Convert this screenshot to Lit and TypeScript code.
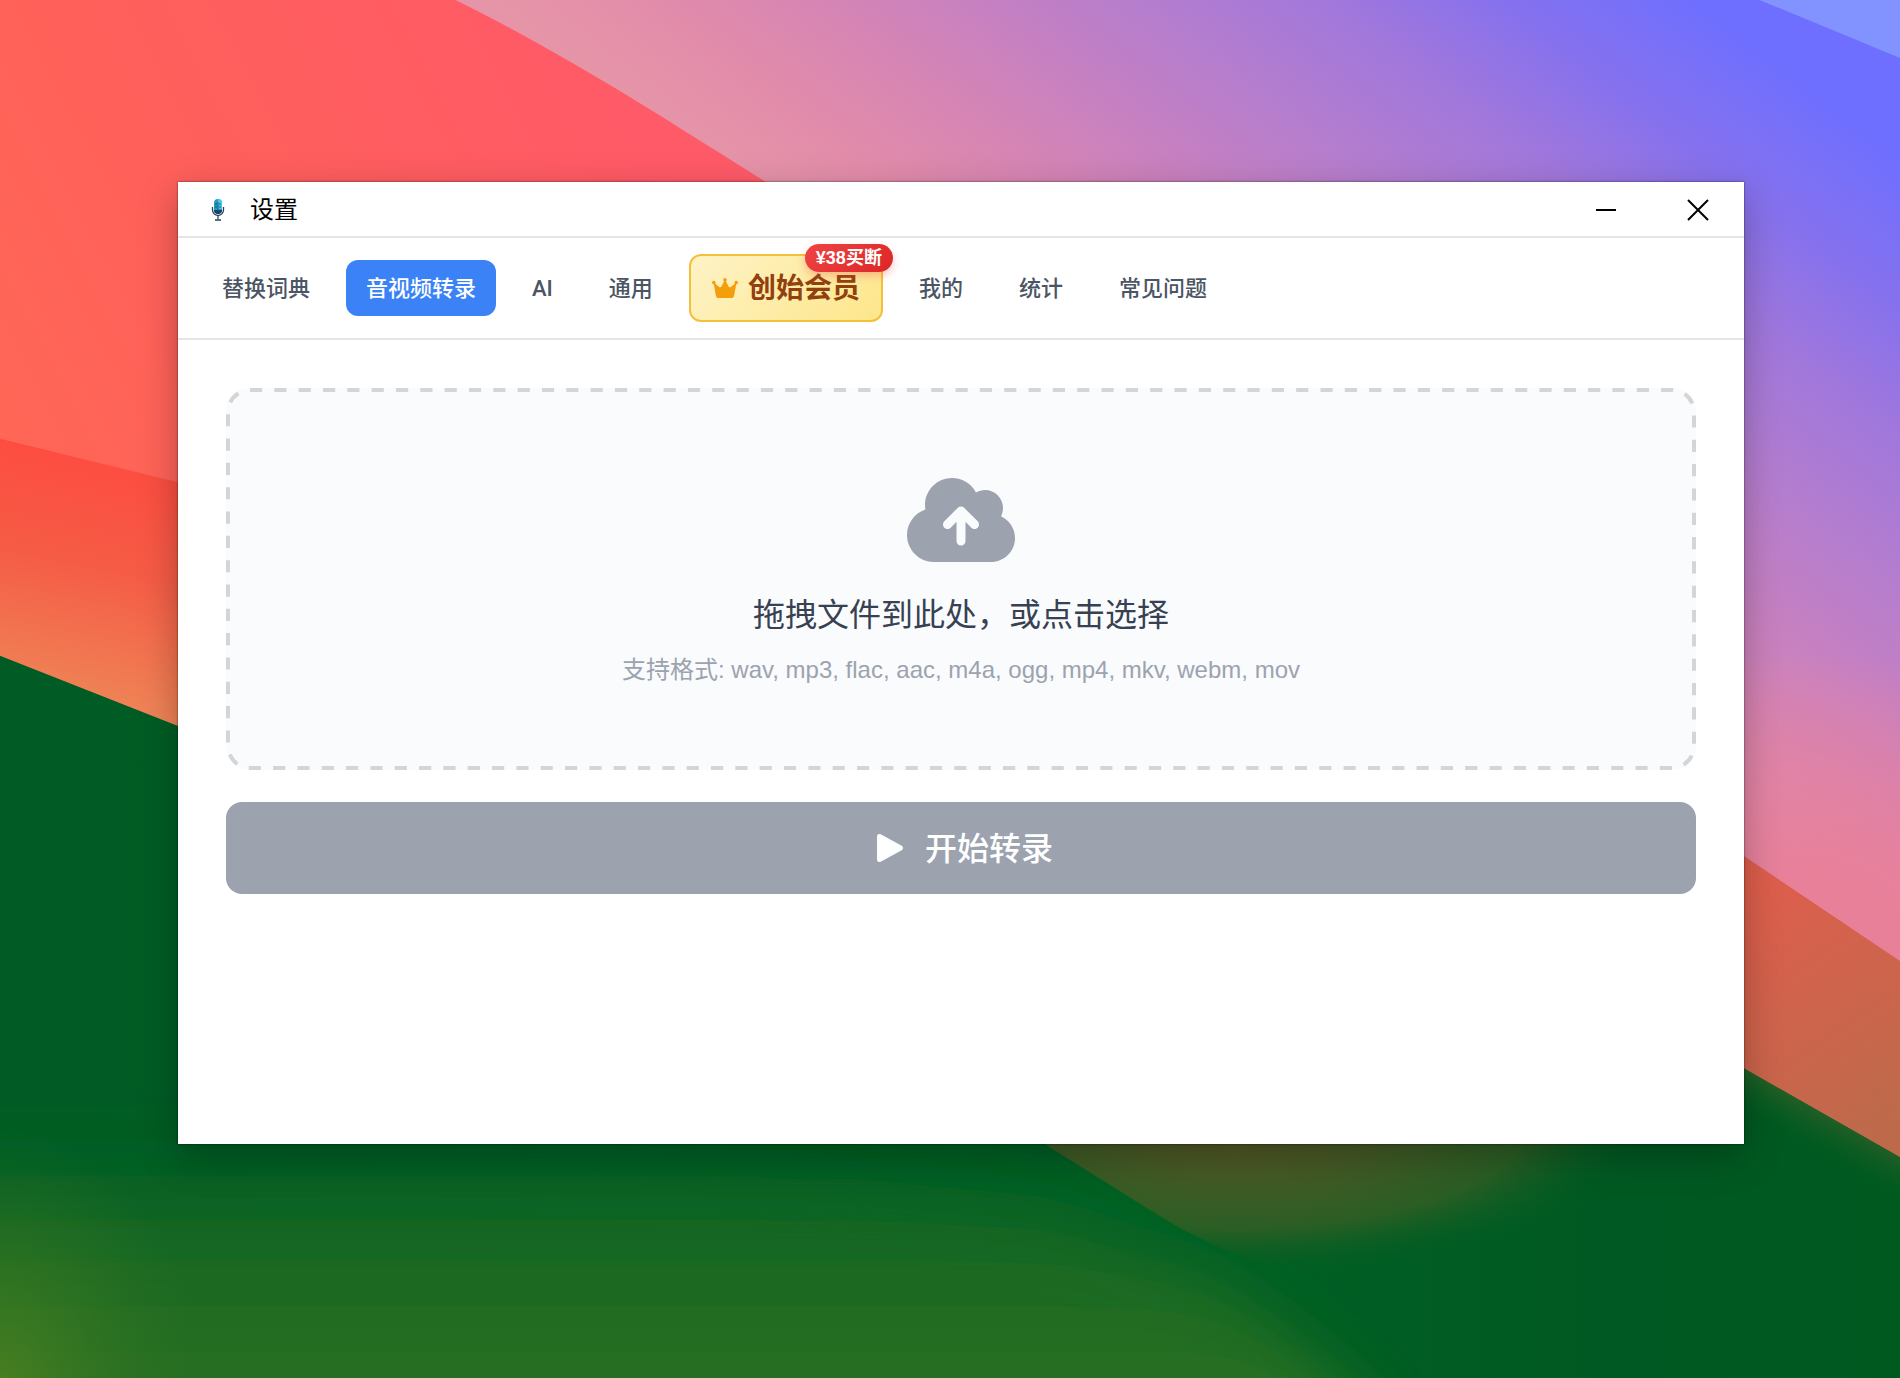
import { LitElement, html, css, svg } from "lit";
import { customElement, state } from "lit/decorators.js";

const FORMATS = ["wav", "mp3", "flac", "aac", "m4a", "ogg", "mp4", "mkv", "webm", "mov"];

const TABS = [
  { id: "dict", label: "替换词典" },
  { id: "media", label: "音视频转录" },
  { id: "ai", label: "AI" },
  { id: "general", label: "通用" },
  { id: "vip", label: "创始会员", badge: "¥38买断" },
  { id: "mine", label: "我的" },
  { id: "stats", label: "统计" },
  { id: "faq", label: "常见问题" },
];

const fontStack = css`"Liberation Sans", "Noto Sans CJK SC", sans-serif`;

@customElement("desktop-wallpaper")
class DesktopWallpaper extends LitElement {
  static styles = css`
    :host { display: block; overflow: hidden; }
    .art { display: block; width: 100%; height: 100%; }
  `;

  render() {
    return html`<svg class="art" viewBox="0 0 1568 1137" preserveAspectRatio="xMidYMid slice" aria-hidden="true">
      <defs>
        <linearGradient id="red" gradientUnits="userSpaceOnUse" x1="0" y1="330" x2="520" y2="60">
          <stop offset="0" stop-color="#ff6656" /><stop offset="0.35" stop-color="#ff605a" />
          <stop offset="1" stop-color="#ff5a68" />
        </linearGradient>
        <linearGradient id="sky" gradientUnits="userSpaceOnUse" x1="152" y1="-197" x2="525" y2="-679">
          <stop offset="0" stop-color="#e695a8" /><stop offset="0.13" stop-color="#e28caa" />
          <stop offset="0.27" stop-color="#d685b4" /><stop offset="0.41" stop-color="#c580c2" />
          <stop offset="0.55" stop-color="#b37dcf" /><stop offset="0.7" stop-color="#a077dc" />
          <stop offset="0.84" stop-color="#8571ee" /><stop offset="1" stop-color="#6e6fff" />
        </linearGradient>
        <radialGradient id="blush" gradientUnits="userSpaceOnUse" cx="1500" cy="800" r="260">
          <stop offset="0" stop-color="#ea8098" /><stop offset="0.3" stop-color="#e8809a" />
          <stop offset="1" stop-color="#e8809a" stop-opacity="0" />
        </radialGradient>
        <linearGradient id="ember" gradientUnits="userSpaceOnUse" x1="60" y1="370" x2="20" y2="570">
          <stop offset="0" stop-color="#fd4c40" /><stop offset="0.45" stop-color="#f55c46" />
          <stop offset="1" stop-color="#ef8456" />
        </linearGradient>
        <linearGradient id="clay" gradientUnits="userSpaceOnUse" x1="1430" y1="740" x2="1560" y2="930">
          <stop offset="0" stop-color="#de5e4c" /><stop offset="1" stop-color="#bd6a4b" />
        </linearGradient>
        <linearGradient id="green" gradientUnits="userSpaceOnUse" x1="0" y1="0" x2="1568" y2="0">
          <stop offset="0" stop-color="#005c24" /><stop offset="0.65" stop-color="#006024" />
          <stop offset="0.85" stop-color="#005922" /><stop offset="1" stop-color="#005a20" />
        </linearGradient>
        <linearGradient id="meadow" gradientUnits="userSpaceOnUse" x1="0" y1="940" x2="0" y2="1137">
          <stop offset="0" stop-color="#086222" stop-opacity="0" /><stop offset="0.4" stop-color="#166723" />
          <stop offset="1" stop-color="#286f22" />
        </linearGradient>
        <radialGradient id="moss" gradientUnits="userSpaceOnUse" cx="0" cy="0" r="1"
          gradientTransform="translate(0 1150) scale(170 220)">
          <stop offset="0" stop-color="#4a8020" /><stop offset="1" stop-color="#2a6f22" stop-opacity="0" />
        </radialGradient>
        <radialGradient id="earth" gradientUnits="userSpaceOnUse" cx="0" cy="0" r="1"
          gradientTransform="translate(1020 920) scale(350 135)">
          <stop offset="0" stop-color="#5c5626" /><stop offset="0.35" stop-color="#475a25" />
          <stop offset="0.7" stop-color="#2a5e24" /><stop offset="1" stop-color="#005d22" stop-opacity="0" />
        </radialGradient>
        <linearGradient id="fern" gradientUnits="userSpaceOnUse" x1="1465" y1="890" x2="1445" y2="926">
          <stop offset="0" stop-color="#2f6028" /><stop offset="1" stop-color="#005a20" stop-opacity="0" />
        </linearGradient>
        <filter id="soft" x="-20%" y="-20%" width="140%" height="140%"><feGaussianBlur stdDeviation="24" /></filter>
      </defs>
      <rect width="1568" height="1137" fill="url(#sky)" />
      <rect x="1240" y="540" width="328" height="300" fill="url(#blush)" />
      <path d="M1452 0H1568V48Z" fill="#8292ff" />
      <path d="M0 0H376C470 46 560 105 632 150L760 240V600H0Z" fill="url(#red)" />
      <path d="M0 362L147 398L400 460V700H0Z" fill="url(#ember)" />
      <path d="M1380 667L1440 707L1568 793V980H1380Z" fill="url(#clay)" />
      <path d="M0 541L147 599L862 844L1300 806L1440 882L1568 955V1137H0Z" fill="url(#green)" />
      <path d="M-80 930L560 955L860 1000L1010 1060L1130 1160V1220H-80Z" fill="url(#meadow)" filter="url(#soft)" />
      <path d="M830 924L862 944L950 999Q1020 1044 1110 1060H1400V850H830Z" fill="url(#earth)" />
      <path d="M1400 860L1440 882L1568 955V1000H1400Z" fill="url(#fern)" />
      <rect y="860" width="300" height="277" fill="url(#moss)" />
    </svg>`;
  }
}

@customElement("transcribe-panel")
class TranscribePanel extends LitElement {
  static styles = css`
    :host { display: flex; flex-direction: column; gap: 32px; padding: 48px; }
    .drop, .start { font-family: ${fontStack}; width: 100%; margin: 0; box-sizing: border-box; cursor: pointer; }
    .drop {
      position: relative; display: flex; flex-direction: column; align-items: center;
      padding: 84px 36px; border: 0; border-radius: 24px;
      background: #f9fbfd; color: #374151;
    }
    .outline { position: absolute; inset: 0; width: 100%; height: 100%; pointer-events: none; }
    .outline rect {
      x: 2px; y: 2px; width: calc(100% - 4px); height: calc(100% - 4px); rx: 22px;
      fill: none; stroke: #d4d5d7; stroke-width: 4px; stroke-dasharray: 1 1;
    }
    .cloud { display: block; width: 108px; height: 96px; margin-bottom: 24px; fill: #9ca3af; }
    .lead { font-size: 32px; line-height: 46px; margin-bottom: 16px; }
    .hint { font-size: 24px; line-height: 32px; color: #9ca3af; }
    .start {
      display: flex; align-items: center; justify-content: center; gap: 16px;
      height: 92px; padding: 0 32px; border: 0; border-radius: 16px;
      background: #9ca3af; color: #fff; font-size: 32px; line-height: 48px; font-weight: 500;
    }
    .start span { padding-top: 2px; }
    .play { display: block; width: 40px; height: 32px; fill: currentColor; }
  `;

  render() {
    return html`
      <button class="drop" type="button">
        <svg class="outline" aria-hidden="true"><rect pathLength="300" /></svg>
        <svg class="cloud" viewBox="0 0 576 512" aria-hidden="true">
          <path fill-rule="evenodd" d="M144 480c-79.5 0-144-64.5-144-144 0-63.4 41-117.2 97.9-136.5-1.3-7.7-1.9-15.5-1.9-23.5 0-79.5 64.5-144 144-144 55.4 0 103.5 31.3 127.6 77.1 14.2-8.3 30.8-13.1 48.4-13.1 53 0 96 43 96 96 0 15.7-3.8 30.6-10.5 43.7 44 20.3 74.5 64.7 74.5 116.3 0 70.7-57.3 128-128 128l-304 0zM305 191c-9.4-9.4-24.6-9.4-33.9 0l-72 72c-9.4 9.4-9.4 24.6 0 33.9s24.6 9.4 33.9 0l31-31L264 368c0 13.3 10.7 24 24 24s24-10.7 24-24l0-102.1 31 31c9.4 9.4 24.6 9.4 33.9 0s9.4-24.6 0-33.9l-72-72z" />
        </svg>
        <span class="lead">拖拽文件到此处，或点击选择</span>
        <span class="hint">支持格式: ${FORMATS.join(", ")}</span>
      </button>
      <button class="start" type="button">
        <svg class="play" viewBox="0 0 448 512" aria-hidden="true">
          <path d="M91.2 36.9c-12.4-6.8-27.4-6.5-39.6 .7S32 57.9 32 72l0 368c0 14.1 7.5 27.2 19.6 34.4s27.2 7.5 39.6 .7l336-184c12.8-7 20.8-20.5 20.8-35.1s-8-28.1-20.8-35.1l-336-184z" />
        </svg>
        <span>开始转录</span>
      </button>`;
  }
}

@customElement("app-root")
class AppRoot extends LitElement {
  static styles = css`
    :host {
      display: grid; min-height: 100vh; box-sizing: border-box;
      font-family: ${fontStack}; color: #000;
    }
    .wallpaper { grid-area: 1 / 1; min-height: 100%; height: 0; }
    .stage { grid-area: 1 / 1; display: flex; padding: 182px 156px 234px 178px; position: relative; }
    .window {
      flex: 1; min-width: 0; display: flex; flex-direction: column; background: #fff;
      box-shadow: 0 0 2px rgba(0, 0, 0, 0.6), 0 12px 36px rgba(0, 0, 0, 0.28);
    }
    .titlebar {
      display: flex; align-items: center; height: 52px; padding: 2px 26px 0 32px;
      border-bottom: 2px solid #e5e5e5;
    }
    .mic { display: block; width: 16px; height: 24px; margin-right: 24px; }
    .title { flex: 1; margin: 0; font-size: 24px; line-height: 36px; font-weight: 400; }
    .controls { display: flex; gap: 52px; }
    .control {
      display: flex; padding: 5px; border: 0; background: none; cursor: pointer; color: #000;
    }
    .control svg { display: block; width: 30px; height: 30px; }
    .tabs {
      display: flex; align-items: center; gap: 16px; height: 100px; padding: 0 24px;
      border-bottom: 2px solid #e5e5e5;
    }
    .tab {
      padding: 13px 20px 11px; border: 0; border-radius: 12px; background: none; color: #4b5563;
      font: 500 22px/32px ${fontStack}; white-space: nowrap; cursor: pointer;
    }
    .latin { font-family: Roboto, sans-serif; }
    .active { background: #3b82f6; color: #fff; }
    .vip {
      position: relative; display: flex; align-items: center; gap: 10px;
      padding: 13px 21px 11px; border: 2px solid #f4c03a;
      background: linear-gradient(135deg, #fef3c7, #fde68a); color: #92400e;
      font-size: 28px; line-height: 40px; font-weight: 600;
    }
    .crown { display: block; width: 26px; height: 24px; margin-bottom: 2px; fill: #f59e0b; }
    .badge {
      position: absolute; top: -12px; right: -12px; padding: 0 11px; border-radius: 14px;
      background: linear-gradient(135deg, #ef4444, #dc2626); color: #fff;
      box-shadow: 0 4px 8px rgba(239, 68, 68, 0.3);
      font-size: 18px; line-height: 28px; font-weight: 700;
    }
  `;

  @state() private current = "media";

  private renderTab(tab: (typeof TABS)[number]) {
    const names = ["tab"];
    if (tab.id === this.current) names.push("active");
    if (tab.badge) names.push("vip");
    if (tab.id === "ai") names.push("latin");
    return html`<button class=${names.join(" ")} type="button" @click=${() => (this.current = tab.id)}>
      ${tab.badge
        ? html`<svg class="crown" viewBox="0 0 576 512" aria-hidden="true">${svg`<path d="M309 106c11.4-7 19-19.7 19-34c0-22.1-17.9-40-40-40s-40 17.9-40 40c0 14.4 7.6 27 19 34L209.7 220.6c-9.1 18.2-32.7 23.4-48.6 10.7L72 160c5-6.7 8-15 8-24c0-22.1-17.9-40-40-40S0 113.9 0 136s17.9 40 40 40c.2 0 .5 0 .7 0L86.4 427.4c5.5 30.4 32 52.6 63 52.6l277.2 0c30.9 0 57.4-22.1 63-52.6L535.3 176c.2 0 .5 0 .7 0c22.1 0 40-17.9 40-40s-17.9-40-40-40s-40 17.9-40 40c0 9 3 17.3 8 24l-89.1 71.3c-15.9 12.7-39.5 7.5-48.6-10.7L309 106z" />`}</svg><span>${tab.label}</span><span class="badge">${tab.badge}</span>`
        : tab.label}
    </button>`;
  }

  render() {
    return html`
      <desktop-wallpaper class="wallpaper"></desktop-wallpaper>
      <div class="stage">
        <main class="window">
          <header class="titlebar">
            <svg class="mic" viewBox="0 0 16 24" aria-hidden="true">
              <rect x="4" y="1" width="8" height="15" rx="4" fill="#1f9cc0" />
              <path d="M8 1a4 4 0 0 1 4 4v6H8Z" fill="#45cbe8" />
              <path d="M4 12h8a4 4 0 0 1-8 0Z" fill="#1d3f66" />
              <path d="M5 6h2M5 9h2M9 6h2M9 9h2M8 4v9" stroke="#1a5f7c" stroke-width="1" />
              <path d="M2.5 9v3a5.5 5.5 0 0 0 11 0V9M8 18v3M5 22h6" fill="none" stroke="#29405f" stroke-width="1.3" />
            </svg>
            <h1 class="title">设置</h1>
            <div class="controls">
              <button class="control" type="button" aria-label="最小化">
                <svg viewBox="0 0 30 30" fill="none" stroke="currentColor" stroke-width="2"><path d="M5 15H25" /></svg>
              </button>
              <button class="control" type="button" aria-label="关闭">
                <svg viewBox="0 0 30 30" fill="none" stroke="currentColor" stroke-width="2"><path d="M5 5L25 25M25 5L5 25" /></svg>
              </button>
            </div>
          </header>
          <nav class="tabs">${TABS.map((tab) => this.renderTab(tab))}</nav>
          <transcribe-panel></transcribe-panel>
        </main>
      </div>`;
  }
}
